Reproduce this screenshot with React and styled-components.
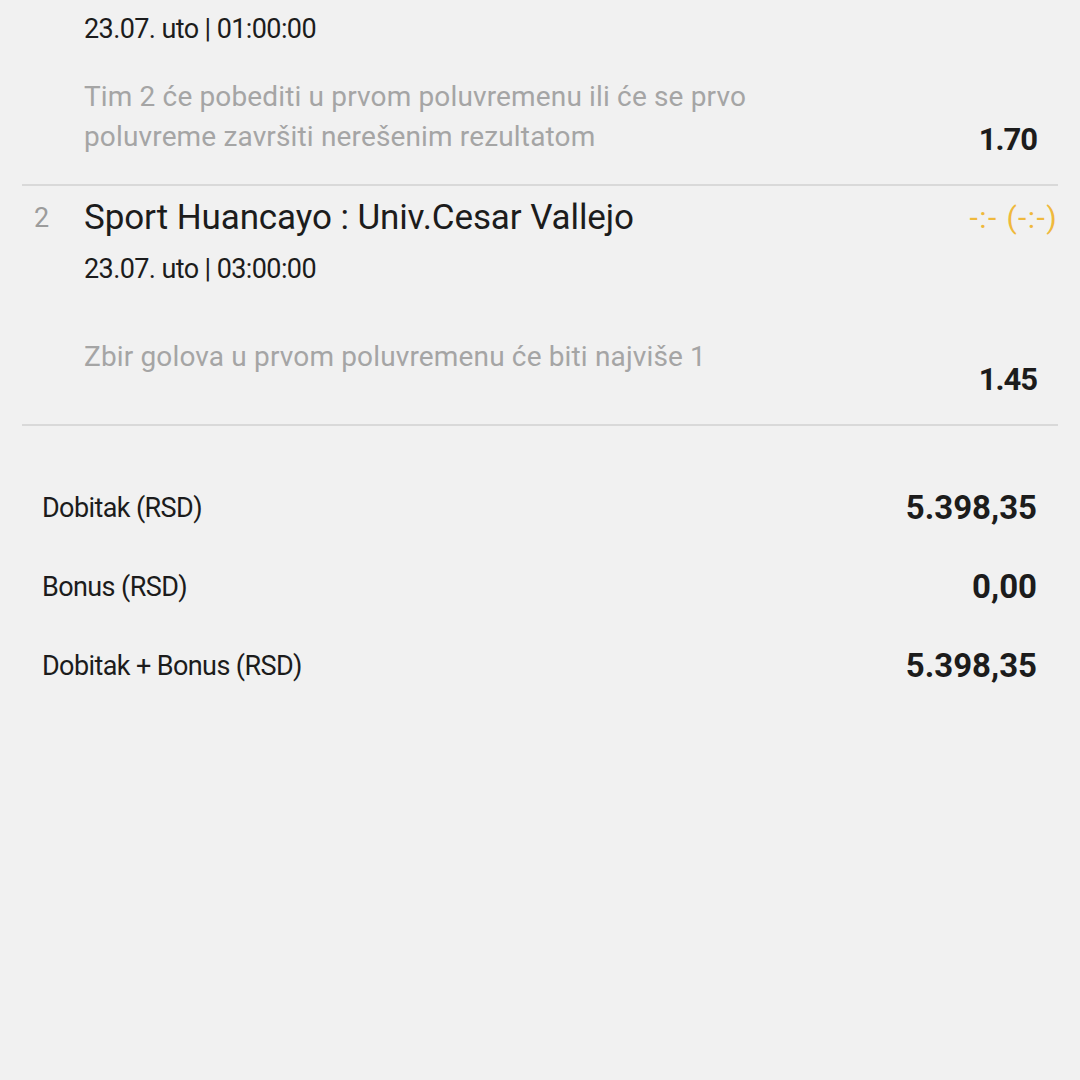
import React from "react";
import styled, { createGlobalStyle } from "styled-components";

const matches = [
  {
    id: 1,
    index: null,
    title: null,
    score: null,
    date: "23.07. uto | 01:00:00",
    pick: ["Tim 2 će pobediti u prvom poluvremenu ili će se prvo", "poluvreme završiti nerešenim rezultatom"],
    odds: "1.70",
    pickGap: 28,
  },
  {
    id: 2,
    index: 2,
    title: "Sport Huancayo : Univ.Cesar Vallejo",
    score: "-:- (-:-)",
    date: "23.07. uto | 03:00:00",
    pick: ["Zbir golova u prvom poluvremenu će biti najviše 1"],
    odds: "1.45",
    pickGap: 48,
  },
];

const totals = [
  { label: "Dobitak (RSD)", value: "5.398,35" },
  { label: "Bonus (RSD)", value: "0,00" },
  { label: "Dobitak + Bonus (RSD)", value: "5.398,35" },
];

function App() {
  return (
    <>
      <GlobalStyle />
      <Page>
        {matches.map((m) => (
          <MatchItem key={m.id} match={m} />
        ))}
        <Summary>
          {totals.map((t, i) => (
            <SummaryRow key={`t-${i}`}>
              <SummaryLabel>{t.label}</SummaryLabel>
              <SummaryValue>{t.value}</SummaryValue>
            </SummaryRow>
          ))}
        </Summary>
      </Page>
    </>
  );
}

function MatchItem({ match }) {
  return (
    <Match $hasTitle={!!match.title}>
      {match.title && (
        <>
          <Index>{match.index}</Index>
          <Title>{match.title}</Title>
          <Score>{match.score}</Score>
        </>
      )}
      <DateText $hasTitle={!!match.title}>{match.date}</DateText>
      <Pick $gap={match.pickGap}>
        <PickText>
          {match.pick.map((line, i) => (
            <div key={`l-${i}`}>{line}</div>
          ))}
        </PickText>
        <Odds>{match.odds}</Odds>
      </Pick>
    </Match>
  );
}

const GlobalStyle = createGlobalStyle`
  html, body {
    margin: 0;
    padding: 0;
    background: #f1f1f1;
  }
  body {
    font-family: Roboto, "Noto Sans", sans-serif;
    color: #1c1c1c;
  }
`;

const Page = styled.div`
  width: 1080px;
  height: 1080px;
  box-sizing: border-box;
  padding: 0 22px;
  background: #f1f1f1;
  overflow: hidden;
`;

const Match = styled.div`
  display: grid;
  grid-template-columns: 62px 1fr auto;
  align-items: center;
  padding-top: ${(props) => (props.$hasTitle ? "10px" : "9px")};
  padding-bottom: 27px;
  border-bottom: 2px solid #d9d9d9;
`;

const Index = styled.div`
  font-size: 27px;
  color: #9c9c9c;
  padding-left: 12px;
  line-height: 44px;
`;

const Title = styled.div`
  font-size: 35px;
  line-height: 44px;
  color: #1c1c1c;
  letter-spacing: -0.1px;
`;

const Score = styled.div`
  font-size: 30px;
  line-height: 44px;
  color: #efb93c;
  letter-spacing: 1.4px;
`;

const DateText = styled.div`
  grid-column: 2 / 4;
  font-size: 27px;
  line-height: 40px;
  letter-spacing: -0.6px;
  margin-top: ${(props) => (props.$hasTitle ? "9px" : "0")};
`;

const Pick = styled.div`
  grid-column: 2 / 4;
  display: flex;
  justify-content: space-between;
  align-items: flex-end;
  min-height: 60px;
  margin-top: ${(props) => props.$gap}px;
  padding-right: 21px;
`;

const PickText = styled.div`
  align-self: flex-start;
  font-size: 28px;
  line-height: 40px;
  color: #a5a5a5;
  letter-spacing: 0.15px;
`;

const Odds = styled.div`
  font-size: 31px;
  font-weight: 700;
  line-height: 34px;
  letter-spacing: -1px;
`;

const Summary = styled.div`
  padding-top: 42px;
`;

const SummaryRow = styled.div`
  display: flex;
  justify-content: space-between;
  align-items: center;
  height: 79px;
  padding: 0 21px 0 20px;
`;

const SummaryLabel = styled.span`
  font-size: 27px;
  letter-spacing: -0.6px;
`;

const SummaryValue = styled.span`
  font-size: 33px;
  font-weight: 700;
  letter-spacing: 0;
`;

export default App;
